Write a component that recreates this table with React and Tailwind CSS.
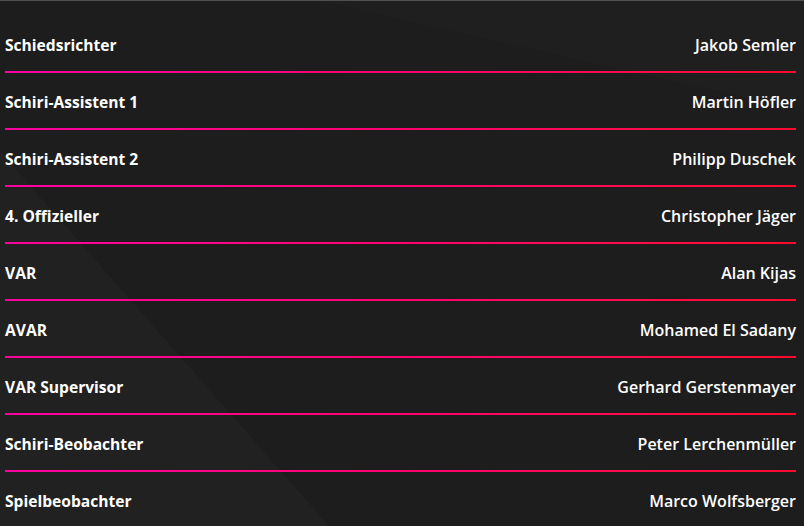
import React from "react";

const rows = [
  ["Schiedsrichter", "Jakob Semler"],
  ["Schiri-Assistent 1", "Martin Höfler"],
  ["Schiri-Assistent 2", "Philipp Duschek"],
  ["4. Offizieller", "Christopher Jäger"],
  ["VAR", "Alan Kijas"],
  ["AVAR", "Mohamed El Sadany"],
  ["VAR Supervisor", "Gerhard Gerstenmayer"],
  ["Schiri-Beobachter", "Peter Lerchenmüller"],
  ["Spielbeobachter", "Marco Wolfsberger"],
];

export default function App() {
  return (
    <div
      className="relative w-[804px] h-[526px] overflow-hidden bg-[#1d1d1d] border-t border-[#505050] text-white"
      style={{ fontFamily: "'Open Sans', 'Noto Sans', sans-serif" }}
    >
      <svg
        className="absolute inset-0 pointer-events-none"
        width="804"
        height="526"
        viewBox="0 0 804 526"
      >
        <path d="M0 150 L330 526 L0 526 Z" fill="#212121" />
        <path d="M320 0 L804 0 L804 110 Z" fill="#1f1f1f" />
      </svg>
      <div className="relative pt-[15px] pl-[5px] pr-[8px]">
        {rows.map(([role, name], i) => (
          <div key={role}>
            <div className="h-[55px] pt-[4px] flex items-center">
              <div className="flex-1 flex items-baseline justify-between leading-none">
                <span className="font-bold text-[15.6px]">{role}</span>
                <span className="font-semibold text-[16px]">{name}</span>
              </div>
            </div>
            {i < rows.length - 1 && (
              <div className="h-[2px] bg-gradient-to-r from-[#ff00a0] via-[#ff0070] to-[#ff0a2a]" />
            )}
          </div>
        ))}
      </div>
    </div>
  );
}
